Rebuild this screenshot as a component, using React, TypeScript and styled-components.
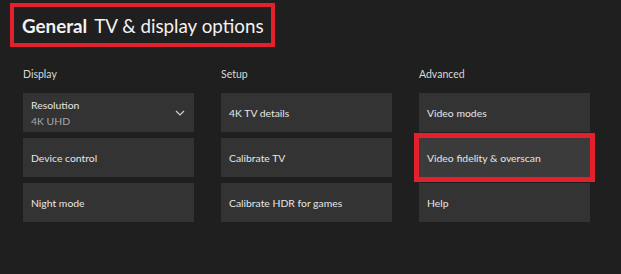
import React from "react"
import styled, { createGlobalStyle } from "styled-components"

const GlobalStyle = createGlobalStyle`
  html, body {
    margin: 0;
    background: #1f1f1f;
  }
  body {
    font-family: Lato, "Open Sans", sans-serif;
    color: #e8e8e8;
  }
`

const Page = styled.div`
  width: 621px;
  height: 274px;
  padding: 3px 0 0 10px;
  box-sizing: border-box;
`

const TitleBox = styled.div`
  display: inline-flex;
  align-items: center;
  height: 44px;
  box-sizing: border-box;
  padding: 0 7px 0 8px;
  border: 4px solid #e3202b;
  font-size: 18.8px;
  color: #f2f2f2;
  white-space: nowrap;
`

const Strong = styled.span`
  font-weight: 700;
  margin-right: 7px;
`

const Columns = styled.div`
  display: grid;
  grid-template-columns: repeat(3, 171px);
  column-gap: 27px;
  margin: 21px 0 0 13px;
`

const Column = styled.div`
  display: flex;
  flex-direction: column;
  gap: 6px;
`

const Label = styled.div`
  font-size: 10.5px;
  color: #d8d8d8;
  height: 17px;
  margin-bottom: 2px;
`

const Tile = styled.div<{ $focused?: boolean }>`
  height: 39px;
  display: flex;
  align-items: center;
  justify-content: space-between;
  padding: 0 9px 0 8px;
  box-sizing: border-box;
  background: ${(p) => (p.$focused ? "#3b3b3b" : "#333333")};
  box-shadow: ${(p) => (p.$focused ? "0 0 0 5px #e3202b" : "none")};
  font-size: 10.4px;
  color: #e6e6e6;
`

const Stack = styled.div`
  display: flex;
  flex-direction: column;
  gap: 4px;
`

const Sub = styled.span`
  color: #a8a8a8;
  font-size: 10.4px;
`

const Chevron = () => (
  <svg width="10" height="6" viewBox="0 0 10 6" fill="none">
    <path d="M1 1l4 4 4-4" stroke="#d0d0d0" strokeWidth="1.2" />
  </svg>
)

export default function App() {
  return (
    <Page>
      <GlobalStyle />
      <TitleBox>
        <Strong>General</Strong>TV &amp; display options
      </TitleBox>
      <Columns>
        <Column>
          <Label>Display</Label>
          <Tile>
            <Stack>
              <span>Resolution</span>
              <Sub>4K UHD</Sub>
            </Stack>
            <Chevron />
          </Tile>
          <Tile>Device control</Tile>
          <Tile>Night mode</Tile>
        </Column>
        <Column>
          <Label>Setup</Label>
          <Tile>4K TV details</Tile>
          <Tile>Calibrate TV</Tile>
          <Tile>Calibrate HDR for games</Tile>
        </Column>
        <Column>
          <Label>Advanced</Label>
          <Tile>Video modes</Tile>
          <Tile $focused>Video fidelity &amp; overscan</Tile>
          <Tile>Help</Tile>
        </Column>
      </Columns>
    </Page>
  )
}
